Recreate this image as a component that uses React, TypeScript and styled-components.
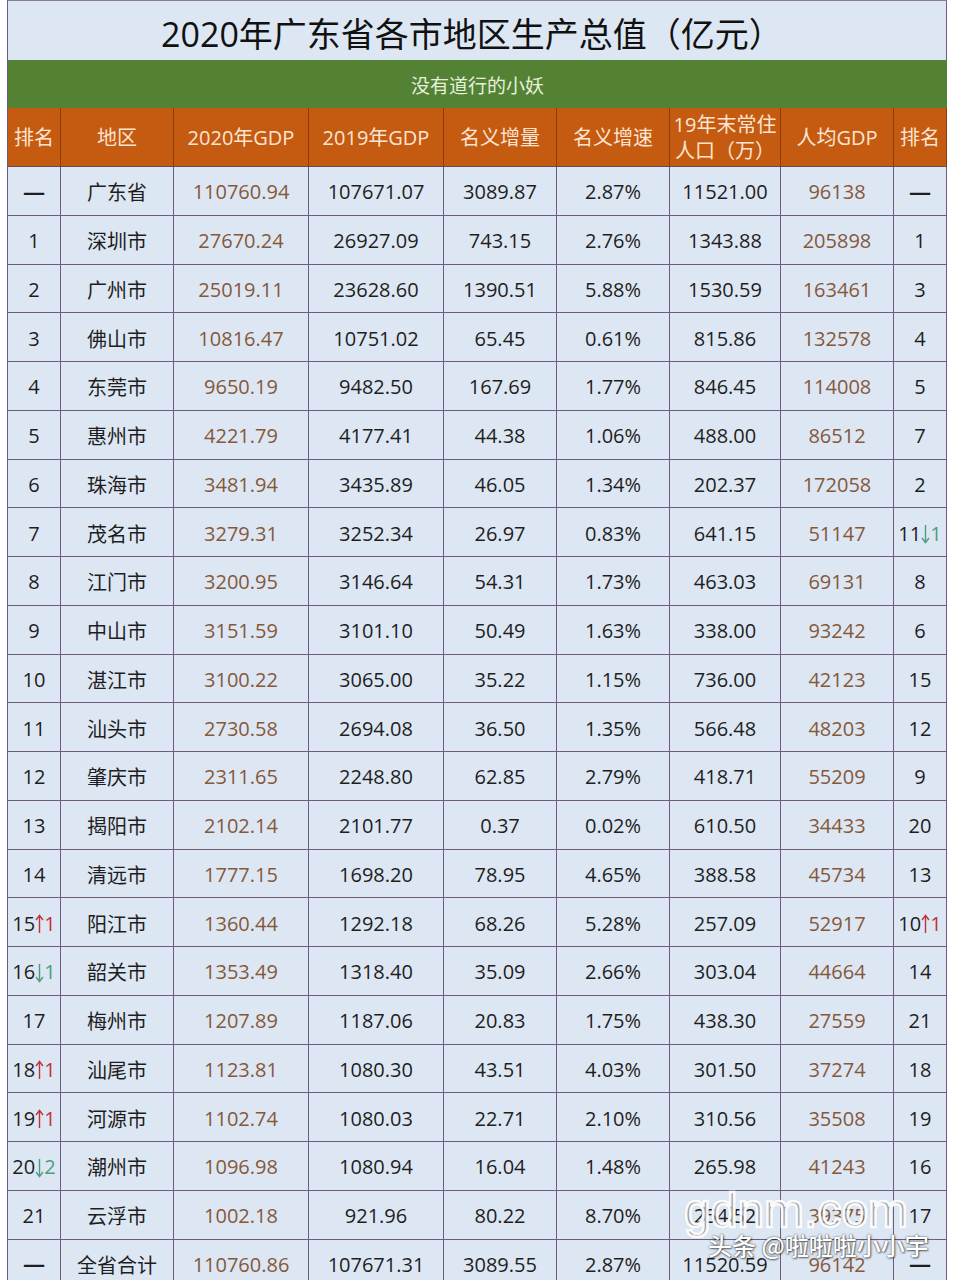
import React from "react";
import styled, { createGlobalStyle } from "styled-components";

const Global = createGlobalStyle`
  html, body { margin: 0; padding: 0; background: #ffffff; }
  body { font-family: "Open Sans", "Noto Sans CJK SC", sans-serif; }
`;

const COLS = "53px 113px 135px 135px 113px 113px 111px 113px 53px";

const Page = styled.div`
  position: relative;
  width: 955px;
  height: 1280px;
  overflow: hidden;
  background: #ffffff;
`;

const Table = styled.div`
  margin-left: 7px;
  width: 940px;
  border-left: 1px solid #6d5b82;
  border-top: 1px solid #8a7aa0;
  box-sizing: border-box;
`;

const TitleRow = styled.div`
  height: 59px;
  background: #dde7f3;
  border-right: 1px solid #6d5b82;
  display: flex;
  align-items: center;
  justify-content: center;
  font-family: "Open Sans", "Noto Sans CJK SC", sans-serif;
  font-size: 34px;
  color: #111111;
  box-sizing: border-box;
  padding-top: 4px;
  padding-right: 10px;
`;

const SubRow = styled.div`
  height: 48px;
  background: #548235;
  display: flex;
  align-items: center;
  justify-content: center;
  font-family: "Noto Sans CJK SC", sans-serif;
  font-size: 19px;
  color: #e6f0dc;
`;

const Row = styled.div<{ $h: number }>`
  display: grid;
  grid-template-columns: ${COLS};
  height: ${(p) => p.$h}px;
`;

const HeadCell = styled.div`
  background: #c55a11;
  color: #fbe5d2;
  border-right: 1px solid #8e3c0c;
  border-bottom: 1px solid #6d4a5a;
  box-sizing: border-box;
  display: flex;
  align-items: center;
  justify-content: center;
  text-align: center;
  font-size: 20px;
  line-height: 26px;
  padding-top: 2px;
`;

const Cell = styled.div<{ $tone?: "dark" | "brown" }>`
  background: #dde7f3;
  color: ${(p) => (p.$tone === "brown" ? "#85583a" : "#1e1e22")};
  border-right: 1px solid #6d5b82;
  border-bottom: 1px solid #6d5b82;
  box-sizing: border-box;
  display: flex;
  align-items: center;
  justify-content: center;
  font-size: 20px;
  white-space: nowrap;
  padding-top: 2px;
`;

const Dash = styled.span`
  font-family: "Noto Sans CJK SC", sans-serif;
  font-size: 22px;
  font-weight: 500;
`;

const Change = styled.span<{ $up: boolean }>`
  color: ${(p) => (p.$up ? "#c4303a" : "#4e9c80")};
  display: inline-flex;
  align-items: center;
`;

const ArrowSvg = styled.svg`
  display: block;
  margin: 2px 0 0 0;
`;

function Arrow({ up }: { up: boolean }) {
  return (
    <ArrowSvg width="9" height="20" viewBox="0 0 9 20" fill="none" stroke="currentColor" strokeWidth="1.4">
      {up ? (
        <>
          <path d="M4.5 19V2" />
          <path d="M1 6L4.5 1.5L8 6" />
        </>
      ) : (
        <>
          <path d="M4.5 1V18" />
          <path d="M1 14L4.5 18.5L8 14" />
        </>
      )}
    </ArrowSvg>
  );
}

const Watermark = styled.div`
  position: absolute;
  left: 684px;
  top: 1186px;
  display: flex;
  flex-direction: column;
  align-items: flex-start;
  pointer-events: none;
`;

const Site = styled.div`
  font-family: "Liberation Sans", sans-serif;
  font-size: 48px;
  line-height: 50px;
  color: rgba(255, 255, 255, 0.2);
  -webkit-text-stroke: 2.5px rgba(255, 255, 255, 0.95);
  text-shadow: 0 0 2px rgba(60, 60, 60, 0.5);
`;

const Author = styled.div`
  font-family: "Noto Sans CJK SC", sans-serif;
  font-size: 24px;
  line-height: 30px;
  font-weight: 500;
  color: #ffffff;
  margin-left: 24px;
  margin-top: -6px;
  text-shadow: 0 0 2px rgba(0, 0, 0, 0.7), 1px 1px 2px rgba(0, 0, 0, 0.5);
`;

type Rk = string | { n: string; up: boolean; d: string };

type R = [Rk, string, string, string, string, string, string, string, Rk];

const rows: R[] = [
  ["—", "广东省", "110760.94", "107671.07", "3089.87", "2.87%", "11521.00", "96138", "—"],
  ["1", "深圳市", "27670.24", "26927.09", "743.15", "2.76%", "1343.88", "205898", "1"],
  ["2", "广州市", "25019.11", "23628.60", "1390.51", "5.88%", "1530.59", "163461", "3"],
  ["3", "佛山市", "10816.47", "10751.02", "65.45", "0.61%", "815.86", "132578", "4"],
  ["4", "东莞市", "9650.19", "9482.50", "167.69", "1.77%", "846.45", "114008", "5"],
  ["5", "惠州市", "4221.79", "4177.41", "44.38", "1.06%", "488.00", "86512", "7"],
  ["6", "珠海市", "3481.94", "3435.89", "46.05", "1.34%", "202.37", "172058", "2"],
  ["7", "茂名市", "3279.31", "3252.34", "26.97", "0.83%", "641.15", "51147", { n: "11", up: false, d: "1" }],
  ["8", "江门市", "3200.95", "3146.64", "54.31", "1.73%", "463.03", "69131", "8"],
  ["9", "中山市", "3151.59", "3101.10", "50.49", "1.63%", "338.00", "93242", "6"],
  ["10", "湛江市", "3100.22", "3065.00", "35.22", "1.15%", "736.00", "42123", "15"],
  ["11", "汕头市", "2730.58", "2694.08", "36.50", "1.35%", "566.48", "48203", "12"],
  ["12", "肇庆市", "2311.65", "2248.80", "62.85", "2.79%", "418.71", "55209", "9"],
  ["13", "揭阳市", "2102.14", "2101.77", "0.37", "0.02%", "610.50", "34433", "20"],
  ["14", "清远市", "1777.15", "1698.20", "78.95", "4.65%", "388.58", "45734", "13"],
  [{ n: "15", up: true, d: "1" }, "阳江市", "1360.44", "1292.18", "68.26", "5.28%", "257.09", "52917", { n: "10", up: true, d: "1" }],
  [{ n: "16", up: false, d: "1" }, "韶关市", "1353.49", "1318.40", "35.09", "2.66%", "303.04", "44664", "14"],
  ["17", "梅州市", "1207.89", "1187.06", "20.83", "1.75%", "438.30", "27559", "21"],
  [{ n: "18", up: true, d: "1" }, "汕尾市", "1123.81", "1080.30", "43.51", "4.03%", "301.50", "37274", "18"],
  [{ n: "19", up: true, d: "1" }, "河源市", "1102.74", "1080.03", "22.71", "2.10%", "310.56", "35508", "19"],
  [{ n: "20", up: false, d: "2" }, "潮州市", "1096.98", "1080.94", "16.04", "1.48%", "265.98", "41243", "16"],
  ["21", "云浮市", "1002.18", "921.96", "80.22", "8.70%", "254.52", "39375", "17"],
  ["—", "全省合计", "110760.86", "107671.31", "3089.55", "2.87%", "11520.59", "96142", "—"],
];

const headers: React.ReactNode[] = [
  "排名",
  "地区",
  "2020年GDP",
  "2019年GDP",
  "名义增量",
  "名义增速",
  <>19年末常住<br />人口（万）</>,
  "人均GDP",
  "排名",
];

function RankCell({ v }: { v: Rk }) {
  if (typeof v === "string") {
    return <Cell>{v === "—" ? <Dash>一</Dash> : v}</Cell>;
  }
  return (
    <Cell>
      {v.n}
      <Change $up={v.up}>
        <Arrow up={v.up} />
        {v.d}
      </Change>
    </Cell>
  );
}

export default function App() {
  return (
    <Page>
      <Global />
      <Table>
        <TitleRow>2020年广东省各市地区生产总值（亿元）</TitleRow>
        <SubRow>没有道行的小妖</SubRow>
        <Row $h={59}>
          {headers.map((h, i) => (
            <HeadCell key={i}>{h}</HeadCell>
          ))}
        </Row>
        {rows.map((r, i) => (
          <Row key={i} $h={48.75}>
            <RankCell v={r[0]} />
            <Cell>{r[1]}</Cell>
            <Cell $tone="brown">{r[2]}</Cell>
            <Cell>{r[3]}</Cell>
            <Cell>{r[4]}</Cell>
            <Cell>{r[5]}</Cell>
            <Cell>{r[6]}</Cell>
            <Cell $tone="brown">{r[7]}</Cell>
            <RankCell v={r[8]} />
          </Row>
        ))}
      </Table>
      <Watermark>
        <Site>gdnm.com</Site>
        <Author>头条 @啦啦啦小小宇</Author>
      </Watermark>
    </Page>
  );
}
